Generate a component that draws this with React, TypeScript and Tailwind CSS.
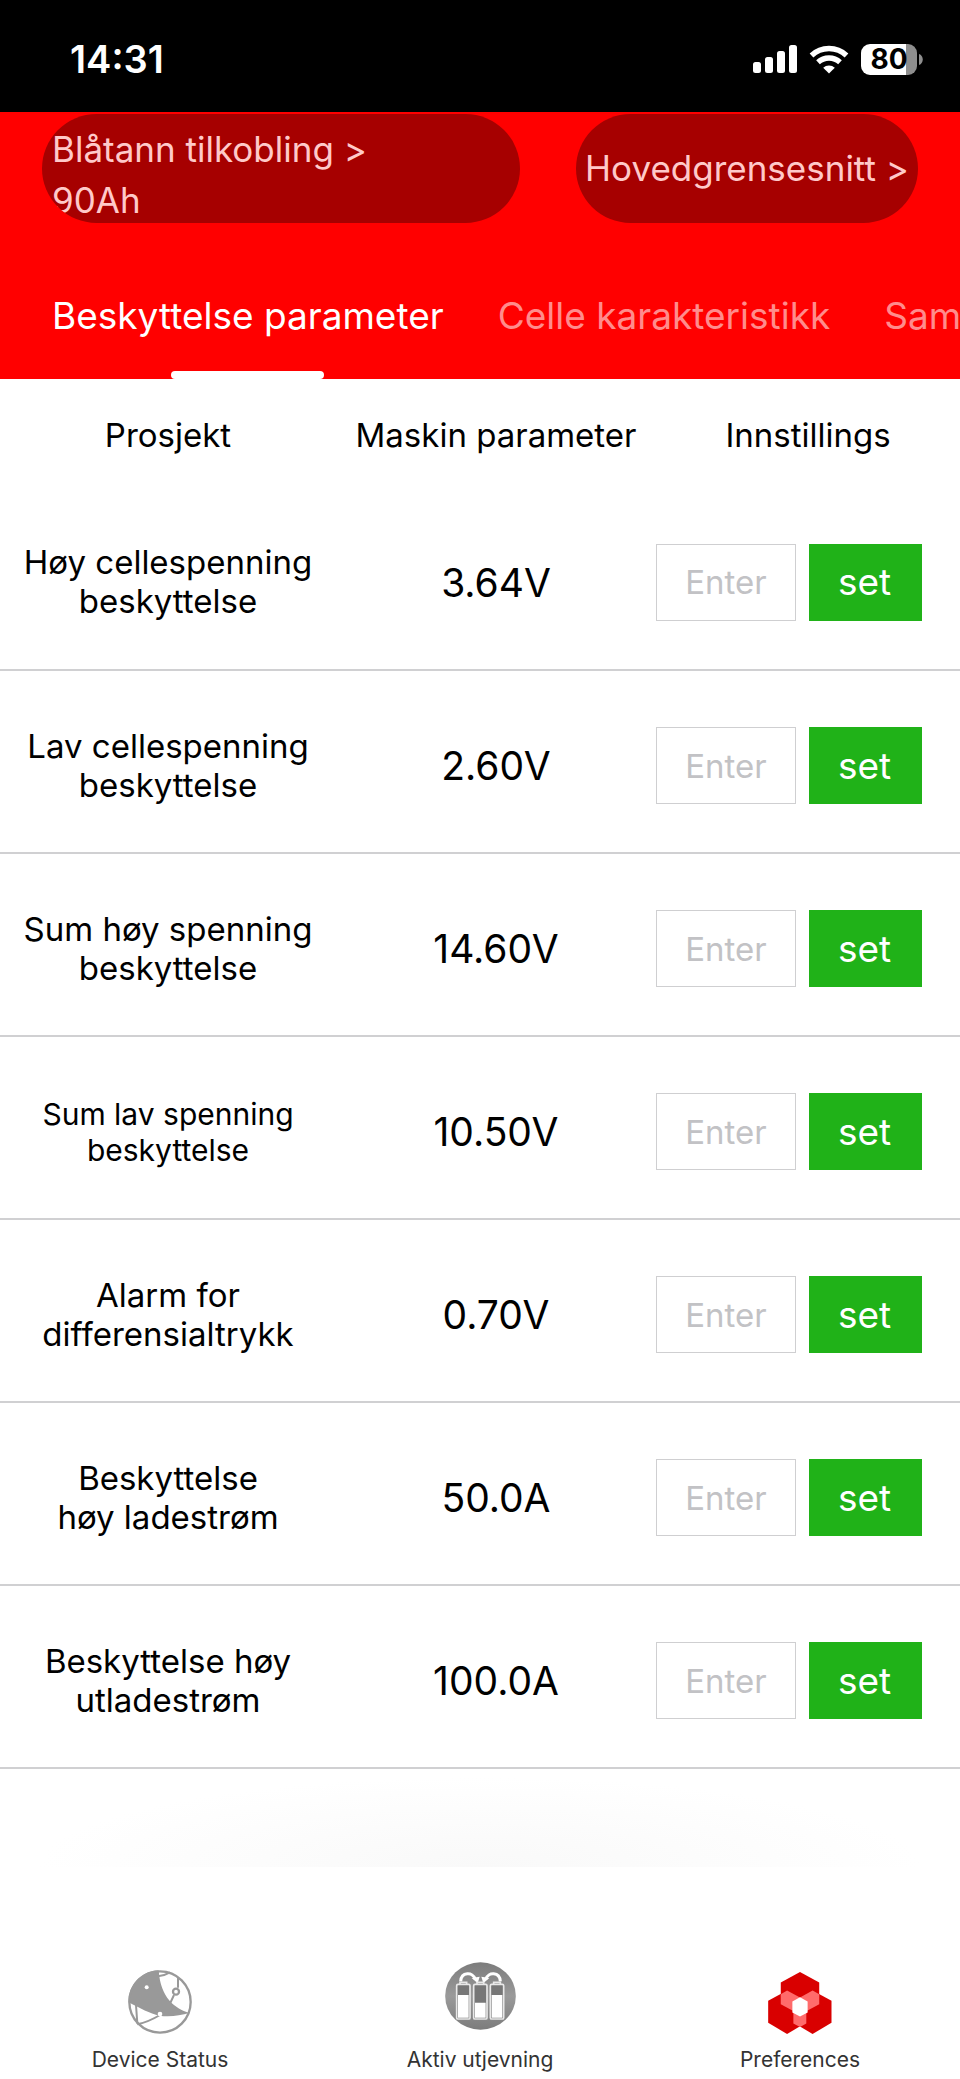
import { useState } from 'react';

const parameters = [
  { id: 'cell-high', lines: ['Høy cellespenning', 'beskyttelse'], value: '3.64V' },
  { id: 'cell-low', lines: ['Lav cellespenning', 'beskyttelse'], value: '2.60V' },
  { id: 'sum-high', lines: ['Sum høy spenning', 'beskyttelse'], value: '14.60V' },
  { id: 'sum-low', lines: ['Sum lav spenning', 'beskyttelse'], value: '10.50V', small: true },
  { id: 'diff', lines: ['Alarm for', 'differensialtrykk'], value: '0.70V' },
  { id: 'charge', lines: ['Beskyttelse', 'høy ladestrøm'], value: '50.0A' },
  { id: 'discharge', lines: ['Beskyttelse høy', 'utladestrøm'], value: '100.0A' },
];

const tabs = ['Beskyttelse parameter', 'Celle karakteristikk', 'Sam'];

function StatusBar() {
  return (
    <div className="flex h-28 items-center justify-between bg-black pt-1.5 pr-[37px] pl-[70px] text-white">
      <span className="text-[38px] font-semibold">14:31</span>
      <div className="flex items-center">
        {/* Signal */}
        <svg width="44" height="28" viewBox="0 0 44 28" fill="currentColor">
          <rect x="0" y="17" width="8" height="11" rx="2.5" />
          <rect x="12" y="12" width="8" height="16" rx="2.5" />
          <rect x="24" y="6" width="8" height="22" rx="2.5" />
          <rect x="36" y="0" width="8" height="28" rx="2.5" />
        </svg>
        {/* Wifi */}
        <svg className="ml-3" width="40" height="29" viewBox="0 0 40 29" fill="none" stroke="currentColor" strokeWidth="5.4">
          <path d="M2.5 10.5a25.5 25.5 0 0 1 35 0" />
          <path d="M9 17.3a16.2 16.2 0 0 1 22 0" />
          <path d="M20 28.5l-5.8-5.8a8.4 8.4 0 0 1 11.6 0z" fill="currentColor" stroke="none" />
        </svg>
        {/* Battery */}
        <div className="ml-3 flex h-[31px] w-14 items-center justify-center rounded-[9px] bg-linear-to-r from-white from-80% to-[#8e8e8e] to-80% text-[28px] font-bold text-black">
          80
        </div>
        <svg className="ml-0.5" width="4" height="11" viewBox="0 0 4 11" fill="#8e8e8e">
          <path d="M0 0c5 1.500 5 9.500 0 11z" />
        </svg>
      </div>
    </div>
  );
}

function DeviceIcon() {
  return (
    <svg width="64" height="64" viewBox="84 59 192 192" fill="none" stroke="#999" strokeWidth="7">
      <path d="M176 60C120 62 84 108 86 156c34 18 64 34 92 40c32 4 62 0 90-8c-44-14-86-44-92-128z" fill="#999" stroke="none" />
      <circle cx="180" cy="155" r="92" />
      <path d="M174 78c14-2 26-6 36-12M234 80v32M222 134l-14 30M108 164l4 56M112 222c28-6 48-16 68-28" strokeWidth="6" />
      <circle cx="228" cy="124" r="9" fill="#fff" />
      <circle cx="140" cy="111" r="6" fill="#fff" stroke="none" />
      <circle cx="180" cy="191" r="7" fill="#fff" stroke="none" />
    </svg>
  );
}

function BalanceIcon() {
  return (
    <svg className="mb-1" width="71" height="68" viewBox="72 66 213 204" fill="none">
      <defs>
        <linearGradient id="balance" x1="0" y1="0" x2="0" y2="1">
          <stop offset="0" stopColor="#7c7c7c" />
          <stop offset="0.5" stopColor="#9a9a9a" />
          <stop offset="1" stopColor="#7c7c7c" />
        </linearGradient>
      </defs>
      <ellipse cx="178.500" cy="168" rx="106" ry="101" fill="url(#balance)" />
      <path d="M119 124c2-28 36-30 44-6M238 124c-2-28-36-30-44-6" stroke="#fff" strokeWidth="9" />
      <path d="M152 114l24-4-6 20zM205 114l-24-4 6 20z" fill="#fff" />
      <g fill="#777" stroke="#e8e8e8" strokeWidth="5">
        <path d="M117 134v-7h20v7M168 134v-7h20v7M218 134v-7h20v7" />
        <rect x="107" y="133" width="40" height="104" rx="4" />
        <rect x="158" y="133" width="40" height="104" rx="4" />
        <rect x="208" y="133" width="40" height="104" rx="4" />
      </g>
      <path d="M111 165h32v68h-32zM162 188h32v45h-32zM212 165h32v68h-32z" fill="#fff" />
    </svg>
  );
}

function PreferencesIcon() {
  return (
    <svg width="64" height="62" viewBox="84 64 192 187">
      <g fill="#d90000">
        <path d="M180 64l58 32v64l-58 32-58-32V96z" />
        <path d="M141 120l57 31v66l-57 34-57-34v-66z" />
        <path d="M218 120l57 31v66l-57 34-57-34v-66z" />
      </g>
      <g fill="#ff6b6b">
        <path d="M122 131l19-11 39 21v39h-23l-35-19z" />
        <path d="M238 131l-20-11-38 21v39h23l35-19z" />
        <path d="M160 178h39v41l-19 11-20-11z" />
      </g>
      <path d="M180 140l23 13v33l-23 12-23-12v-33z" fill="#fff" />
    </svg>
  );
}

const navItems = [
  { label: 'Device Status', icon: <DeviceIcon /> },
  { label: 'Aktiv utjevning', icon: <BalanceIcon /> },
  { label: 'Preferences', icon: <PreferencesIcon /> },
];

export default function App() {
  const [activeTab, setActiveTab] = useState(0);
  const [values, setValues] = useState<Record<string, string>>({});

  return (
    <div className="flex min-h-screen flex-col overflow-hidden bg-white font-['Inter','Liberation_Sans',sans-serif] text-black">
      <StatusBar />

      <header className="bg-[#ff0000] pt-0.5">
        <div className="flex justify-between gap-14 pr-[42px] pl-[42px]">
          <button type="button" className="h-[109px] flex-1 overflow-hidden rounded-full bg-[#a60000] pt-2.5 pl-2.5 text-left text-[35px] leading-[51px] text-[#ffc9c9]">
            Blåtann tilkobling &gt;
            <br />
            90Ah
          </button>
          <button type="button" className="h-[109px] w-[342px] rounded-full bg-[#a60000] text-[35px] whitespace-nowrap text-[#ffc9c9]">
            Hovedgrensesnitt &gt;
          </button>
        </div>

        {/* Tabs */}
        <div role="tablist" className="mt-11 flex gap-[54px] overflow-hidden pl-[52px]">
          {tabs.map((tab, i) => (
            <button
              key={tab}
              type="button"
              role="tab"
              aria-selected={i === activeTab}
              onClick={() => setActiveTab(i)}
              className={`flex h-28 shrink-0 flex-col items-center justify-between pt-6 text-[37px] leading-[50px] whitespace-nowrap ${i === activeTab ? 'text-white' : 'text-[#ff8c8c]'}`}
            >
              {tab}
              {i === activeTab && <span className="h-2 w-[153px] rounded bg-white" />}
            </button>
          ))}
        </div>
      </header>

      <main className="flex flex-1 flex-col">
        <table className="w-full table-fixed border-collapse text-center">
          <thead>
            <tr className="h-[108px] text-[33px]">
              <th className="w-[35%] pt-1.5 font-normal">Prosjekt</th>
              <th className="pt-1.5 font-normal whitespace-nowrap">Maskin parameter</th>
              <th className="w-[304px] pt-1.5 font-normal">Innstillings</th>
            </tr>
          </thead>
          <tbody>
            {parameters.map((p) => (
              <tr key={p.id} className="h-[183px] border-b-2 border-[#d0d0d2]">
                <td className="pt-2">
                  <label htmlFor={p.id} className={`block whitespace-nowrap ${p.small ? 'text-[30px] leading-9' : 'text-[33px] leading-[39px]'}`}>
                    {p.lines[0]}
                    <br />
                    {p.lines[1]}
                  </label>
                </td>
                <td className="pt-2.5 text-[39px]">{p.value}</td>
                <td className="pt-2">
                  <div className="flex gap-[13px] pr-[38px]">
                    <input
                      id={p.id}
                      type="text"
                      placeholder="Enter"
                      value={values[p.id] ?? ''}
                      onChange={(e) => setValues({ ...values, [p.id]: e.target.value })}
                      className="h-[77px] w-[140px] border border-[#cfcfd1] text-center text-[33px] placeholder:text-[#c2c2c5]"
                    />
                    <button type="button" className="h-[77px] flex-1 bg-[#20b218] pr-0.5 text-[37px] text-white">
                      set
                    </button>
                  </div>
                </td>
              </tr>
            ))}
          </tbody>
        </table>
        <div className="min-h-24 flex-1 bg-[radial-gradient(ellipse_at_bottom,#f9f9f9,#ffffff_65%)]" />
      </main>

      <nav className="grid h-[212px] grid-cols-3 bg-white pb-[7px]">
        {navItems.map((item) => (
          <a key={item.label} href="#" className="flex flex-col items-center justify-end text-[21px] leading-6 text-[#333]">
            {item.icon}
            <span className="mt-3.5">{item.label}</span>
          </a>
        ))}
      </nav>
    </div>
  );
}
